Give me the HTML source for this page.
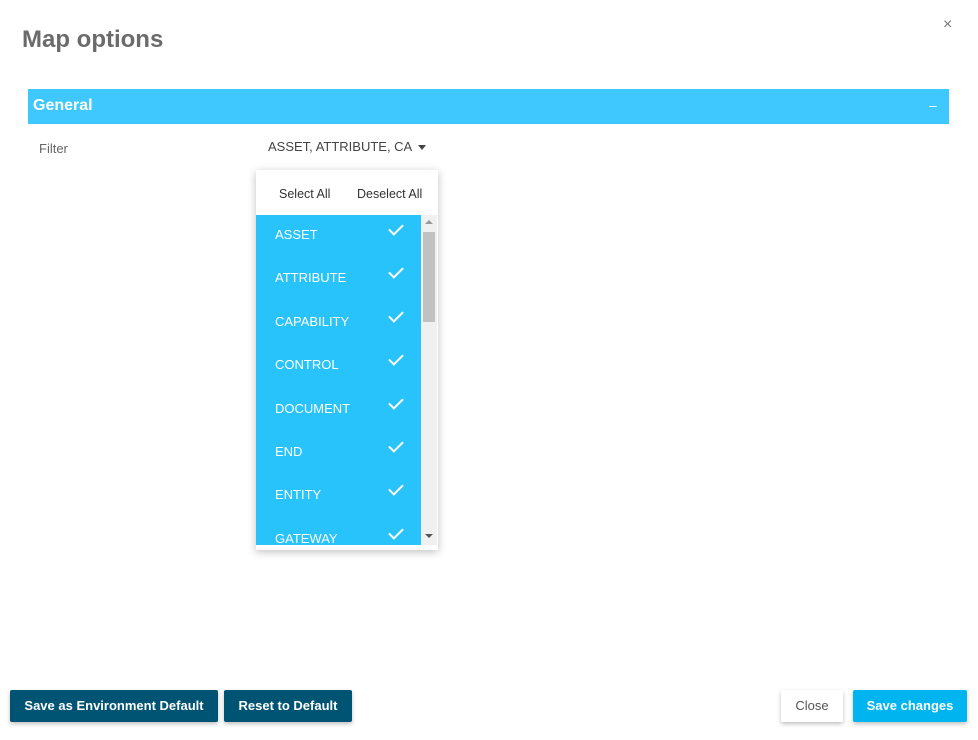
<!DOCTYPE html>
<html><head><style>
body{margin:0;width:978px;height:740px;background:#fff;font-family:"Liberation Sans",sans-serif;position:relative;overflow:hidden}
.a{position:absolute}
.btn{position:absolute;top:690px;height:32px;line-height:32px;font-size:13px;font-weight:bold;color:#fff;text-align:center;border-radius:2px;box-shadow:0 2px 4px rgba(0,0,0,.25)}
.it{position:absolute;left:19px;color:#fff;font-size:13px}
.ck{position:absolute;left:133px;width:12px;height:6px;border-left:2px solid #fff;border-bottom:2px solid #fff;transform:rotate(-45deg)}
</style></head><body>
<div class="a" style="left:22px;top:26px;font-size:24px;font-weight:bold;color:#6b6b6b">Map options</div>
<div class="a" style="left:943px;top:16px;font-size:16px;color:#777">×</div>
<div class="a" style="left:28px;top:89px;width:921px;height:35px;background:#3ec8fe"></div>
<div class="a" style="left:33px;top:97px;font-size:16px;font-weight:bold;color:#fff">General</div>
<div class="a" style="left:929px;top:97px;font-size:14px;color:#fff">–</div>
<div class="a" style="left:39px;top:141px;font-size:13px;color:#666">Filter</div>
<div class="a" style="left:268px;top:139px;font-size:13px;color:#444">ASSET, ATTRIBUTE, CA</div>
<div class="a" style="left:418px;top:145px;border:4px solid transparent;border-top:5px solid #444"></div>
<div class="a" style="left:256px;top:170px;width:182px;height:380px;background:#fff;box-shadow:0 2px 8px rgba(0,0,0,.25)">
 <div class="a" style="left:23px;top:17px;font-size:12.5px;color:#333">Select All</div>
 <div class="a" style="left:101px;top:17px;font-size:12.5px;color:#333">Deselect All</div>
 <div class="a" style="left:0;top:45px;width:165px;height:330px;background:#29c3fb;overflow:hidden">
  <div class="it" style="top:12px">ASSET</div><div class="ck" style="top:9px"></div>
  <div class="it" style="top:55px">ATTRIBUTE</div><div class="ck" style="top:52px"></div>
  <div class="it" style="top:99px">CAPABILITY</div><div class="ck" style="top:96px"></div>
  <div class="it" style="top:142px">CONTROL</div><div class="ck" style="top:139px"></div>
  <div class="it" style="top:186px">DOCUMENT</div><div class="ck" style="top:183px"></div>
  <div class="it" style="top:229px">END</div><div class="ck" style="top:226px"></div>
  <div class="it" style="top:272px">ENTITY</div><div class="ck" style="top:269px"></div>
  <div class="it" style="top:316px">GATEWAY</div><div class="ck" style="top:313px"></div>
 </div>
 <div class="a" style="left:165px;top:45px;width:16px;height:330px;background:#f0f0f0"></div>
 <div class="a" style="left:169px;top:50px;border:4px solid transparent;border-bottom:4px solid #999;border-top:0"></div>
 <div class="a" style="left:167px;top:62px;width:12px;height:90px;background:#c1c1c1"></div>
 <div class="a" style="left:169px;top:364px;border:4px solid transparent;border-top:4px solid #555;border-bottom:0"></div>
</div>
<div class="btn" style="left:10px;width:208px;background:#005473">Save as Environment Default</div>
<div class="btn" style="left:224px;width:128px;background:#005473">Reset to Default</div>
<div class="btn" style="left:781px;width:62px;background:#fff;color:#555;font-weight:normal">Close</div>
<div class="btn" style="left:853px;width:114px;background:#00b4f0">Save changes</div>
</body></html>
